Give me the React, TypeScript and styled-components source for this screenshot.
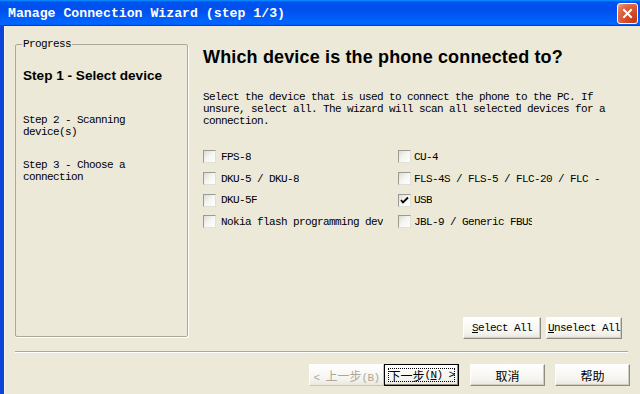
import React from 'react';
import styled, { createGlobalStyle } from 'styled-components';

const GlobalStyle = createGlobalStyle`
  html, body {
    margin: 0;
    padding: 0;
    background: #ECE9D8;
  }
  body {
    width: 640px;
    height: 394px;
    overflow: hidden;
  }
`;

const Window = styled.div`
  width: 640px;
  height: 394px;
  display: flex;
  flex-direction: column;
  overflow: hidden;
  font-family: "Liberation Mono", "Noto Sans CJK SC", monospace;
  font-size: 11px;
  letter-spacing: -0.6px;
  color: #000;
`;

const TitleBar = styled.div`
  height: 26px;
  flex: none;
  display: flex;
  align-items: center;
  justify-content: space-between;
  padding: 0 2px 0 8px;
  background: linear-gradient(180deg, #0997ff, #0053ee 8%, #0050ee 40%, #0066ff 88%, #0066ff 93%, #005bff 95%, #003dd7 96%, #003dd7);
`;

const Title = styled.div`
  color: #fff;
  font-family: "Liberation Mono", monospace;
  font-weight: bold;
  font-size: 13.2px;
  letter-spacing: 0;
  white-space: nowrap;
`;

const CloseButton = styled.div`
  width: 21px;
  height: 21px;
  box-sizing: border-box;
  border: 1px solid #fff;
  border-radius: 3px;
  background: radial-gradient(circle at 85% 85%, #c43a17 0%, #d9532e 50%, #e2704f 75%, #f0a58c 100%);
  display: flex;
  align-items: center;
  justify-content: center;
`;

const Frame = styled.div`
  flex: 1;
  display: flex;
  flex-direction: column;
  padding: 12px 12px 0 11px;
  border-left: 4px solid #0b44d8;
  background: #ECE9D8;
  box-shadow: inset 1px 0 0 #f6f4ea;
`;

const Main = styled.div`
  display: flex;
  align-items: flex-start;
  height: 301px;
`;

const Group = styled.fieldset`
  width: 173px;
  height: 299px;
  box-sizing: border-box;
  margin: 0;
  padding: 0;
  border: 1px solid #aca899;
  border-radius: 2px;
  box-shadow: 1px 1px 0 #fff;
`;

const Legend = styled.legend`
  margin-left: 6px;
  padding: 0 1px;
  line-height: 12px;
`;

const Steps = styled.div`
  padding: 18px 0 0 7px;
  display: flex;
  flex-direction: column;
`;

const CurrentStep = styled.div`
  font-family: "Liberation Sans", Arial, sans-serif;
  font-weight: bold;
  font-size: 13.6px;
  letter-spacing: 0;
  line-height: 16px;
  white-space: nowrap;
`;

const Step = styled.div<{ $gap: number }>`
  margin-top: ${({ $gap }) => $gap}px;
  max-width: 140px;
  line-height: 12px;
`;

const Panel = styled.div`
  flex: 1;
  height: 100%;
  margin-left: 15px;
  display: flex;
  flex-direction: column;
`;

const Heading = styled.h1`
  margin: 8px 0 0;
  font-family: "Liberation Sans", Arial, sans-serif;
  font-weight: bold;
  font-size: 18px;
  letter-spacing: 0.15px;
  line-height: 22px;
`;

const Description = styled.p`
  margin: 23px 0 0;
  width: 420px;
  line-height: 12px;
`;

const Devices = styled.div`
  margin-top: 19px;
  display: grid;
  grid-template-columns: 195px 1fr;
  grid-auto-rows: 21.7px;
`;

const CheckRow = styled.label<{ $gap: number }>`
  display: flex;
  align-items: center;
  gap: ${({ $gap }) => $gap}px;
  min-width: 0;
`;

const Box = styled.span`
  width: 13px;
  height: 13px;
  flex: none;
  box-sizing: border-box;
  border: 1px solid;
  border-color: #9a9a92 #e2e0d6 #e2e0d6 #9a9a92;
  background: linear-gradient(135deg, #dcdbd3 0%, #f4f4f0 45%, #ffffff 100%);
  display: flex;
  align-items: center;
  justify-content: center;
`;

const CheckLabel = styled.span<{ $clip?: number }>`
  white-space: nowrap;
  overflow: hidden;
  line-height: 12px;
  max-width: ${({ $clip }) => ($clip ? `${$clip}px` : 'none')};
`;

const ButtonRow = styled.div`
  margin-top: auto;
  display: flex;
  justify-content: flex-end;
  gap: 5px;
  padding-right: 6px;
`;

const Button = styled.button<{ $w: number; $default?: boolean }>`
  width: ${({ $w }) => $w}px;
  height: 22px;
  box-sizing: border-box;
  margin: 0;
  padding: 0;
  font: inherit;
  letter-spacing: inherit;
  color: #000;
  background: linear-gradient(180deg, #ffffff 0%, #f5f4ef 70%, #e9e7de 100%);
  border: 1px solid;
  border-color: ${({ $default }) => ($default ? '#000' : '#fff #8e8b80 #8e8b80 #fff')};
  box-shadow: ${({ $default }) => ($default ? 'inset -1px -1px 0 #8e8b80' : 'inset -1px -1px 0 #cfccc0')};
  display: flex;
  align-items: center;
  justify-content: center;
  white-space: nowrap;

  &:disabled {
    color: #aca899;
    border-color: #fff #c9c6bb #c9c6bb #fff;
    box-shadow: none;
  }
`;

const Focus = styled.span`
  width: calc(100% - 6px);
  height: calc(100% - 6px);
  box-sizing: border-box;
  border: 1px dotted #000;
  display: flex;
  align-items: center;
  justify-content: center;
`;

const Cjk = styled.span`
  font-family: "Noto Sans CJK SC", sans-serif;
  font-size: 12px;
  letter-spacing: 0;
`;

const Separator = styled.div`
  margin-top: 12px;
  border-top: 1px solid #aca899;
  border-bottom: 1px solid #fff;
`;

const Footer = styled.div`
  margin: 11px -2px 0 0;
  display: flex;
  justify-content: flex-end;
`;

const Spacer = styled.div<{ $w: number }>`
  width: ${({ $w }) => $w}px;
`;

const CheckMark = () => (
  <svg width="9" height="9" viewBox="0 0 9 9">
    <polyline points="1,4 3,6.5 8,1.5" fill="none" stroke="#000" strokeWidth="1.8" />
  </svg>
);

type Device = { label: string; checked?: boolean; clip?: number };

// two columns, read left to right; labels that the original control clips carry a width
const devices: Device[] = [
  { label: 'FPS-8' },
  { label: 'CU-4' },
  { label: 'DKU-5 / DKU-8' },
  { label: 'FLS-4S / FLS-5 / FLC-20 / FLC -' },
  { label: 'DKU-5F' },
  { label: 'USB', checked: true },
  { label: 'Nokia flash programming device', clip: 162 },
  { label: 'JBL-9 / Generic FBUS', clip: 118 },
];

const App: React.FC = () => (
  <>
    <GlobalStyle />
    <Window>
      <TitleBar>
        <Title>Manage Connection Wizard (step 1/3)</Title>
        <CloseButton>
          <svg width="11" height="11" viewBox="0 0 11 11">
            <path d="M2 2 L9 9 M9 2 L2 9" stroke="#fff" strokeWidth="2" strokeLinecap="square" />
          </svg>
        </CloseButton>
      </TitleBar>
      <Frame>
        <Main>
          <Group>
            <Legend>Progress</Legend>
            <Steps>
              <CurrentStep>Step 1 - Select device</CurrentStep>
              <Step $gap={30}>Step 2 - Scanning device(s)</Step>
              <Step $gap={21}>Step 3 - Choose a connection</Step>
            </Steps>
          </Group>
          <Panel>
            <Heading>Which device is the phone connected to?</Heading>
            <Description>
              Select the device that is used to connect the phone to the PC. If unsure, select all. The wizard will
              scan all selected devices for a connection.
            </Description>
            <Devices>
              {devices.map((d, i) => (
                <CheckRow key={d.label} $gap={i % 2 ? 3 : 5}>
                  <Box>{d.checked && <CheckMark />}</Box>
                  <CheckLabel $clip={d.clip}>{d.label}</CheckLabel>
                </CheckRow>
              ))}
            </Devices>
            <ButtonRow>
              <Button $w={78}>
                <span>
                  <u>S</u>elect All
                </span>
              </Button>
              <Button $w={76}>
                <span>
                  <u>U</u>nselect All
                </span>
              </Button>
            </ButtonRow>
          </Panel>
        </Main>
        <Separator />
        <Footer>
          <Button $w={75} disabled>
            <span>
              &lt; <Cjk>上一步</Cjk>(B)
            </span>
          </Button>
          <Button $w={75} $default>
            <Focus>
              <Cjk>下一步</Cjk>(<u>N</u>) &gt;
            </Focus>
          </Button>
          <Spacer $w={11} />
          <Button $w={75}>
            <Cjk>取消</Cjk>
          </Button>
          <Spacer $w={10} />
          <Button $w={75}>
            <Cjk>帮助</Cjk>
          </Button>
        </Footer>
      </Frame>
    </Window>
  </>
);

export default App;
